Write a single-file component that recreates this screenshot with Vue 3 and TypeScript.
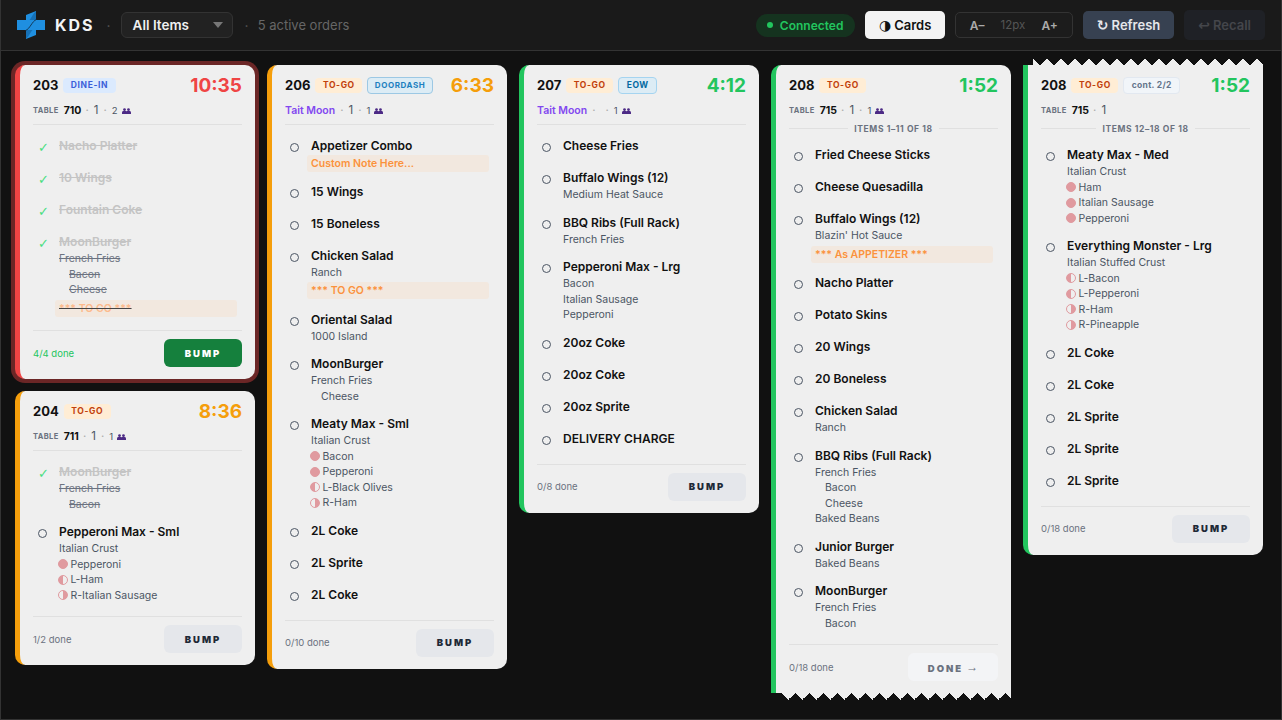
<script setup lang="ts">
type LineKind = 'sub' | 'indent' | 'full' | 'left' | 'right'

interface Line {
  text: string
  kind: LineKind
}

interface Item {
  name: string
  done?: boolean
  lines?: Line[]
  note?: string
}

interface Chip {
  label: string
  tone: 'dine' | 'togo' | 'dash' | 'eow' | 'cont'
}

interface Ticket {
  id: string
  number: string
  chips: Chip[]
  time: string
  tone: 'red' | 'amber' | 'green'
  table?: string
  guest?: string
  seats: string
  covers?: string
  range?: string
  items: Item[]
  progress: string
  action: string
  alert?: boolean
  allDone?: boolean
  tornTop?: boolean
  tornBottom?: boolean
}

const sub = (text: string): Line => ({ text, kind: 'sub' })
const indent = (text: string): Line => ({ text, kind: 'indent' })
const full = (text: string): Line => ({ text, kind: 'full' })
const left = (text: string): Line => ({ text, kind: 'left' })
const right = (text: string): Line => ({ text, kind: 'right' })
const plain = (...names: string[]): Item[] => names.map((name) => ({ name }))

const togo: Chip = { label: 'TO-GO', tone: 'togo' }

const columns: Ticket[][] = [
  [
    {
      id: 'a203',
      number: '203',
      chips: [{ label: 'DINE-IN', tone: 'dine' }],
      time: '10:35',
      tone: 'red',
      table: '710',
      seats: '1',
      covers: '2',
      alert: true,
      allDone: true,
      items: [
        { name: 'Nacho Platter', done: true },
        { name: '10 Wings', done: true },
        { name: 'Fountain Coke', done: true },
        {
          name: 'MoonBurger',
          done: true,
          lines: [sub('French Fries'), indent('Bacon'), indent('Cheese')],
          note: '*** TO GO ***',
        },
      ],
      progress: '4/4 done',
      action: 'BUMP',
    },
    {
      id: 'a204',
      number: '204',
      chips: [togo],
      time: '8:36',
      tone: 'amber',
      table: '711',
      seats: '1',
      covers: '1',
      items: [
        { name: 'MoonBurger', done: true, lines: [sub('French Fries'), indent('Bacon')] },
        {
          name: 'Pepperoni Max - Sml',
          lines: [sub('Italian Crust'), full('Pepperoni'), left('L-Ham'), right('R-Italian Sausage')],
        },
      ],
      progress: '1/2 done',
      action: 'BUMP',
    },
  ],
  [
    {
      id: 'a206',
      number: '206',
      chips: [togo, { label: 'DOORDASH', tone: 'dash' }],
      time: '6:33',
      tone: 'amber',
      guest: 'Tait Moon',
      seats: '1',
      covers: '1',
      items: [
        { name: 'Appetizer Combo', note: 'Custom Note Here...' },
        ...plain('15 Wings', '15 Boneless'),
        { name: 'Chicken Salad', lines: [sub('Ranch')], note: '*** TO GO ***' },
        { name: 'Oriental Salad', lines: [sub('1000 Island')] },
        { name: 'MoonBurger', lines: [sub('French Fries'), indent('Cheese')] },
        {
          name: 'Meaty Max - Sml',
          lines: [sub('Italian Crust'), full('Bacon'), full('Pepperoni'), left('L-Black Olives'), right('R-Ham')],
        },
        ...plain('2L Coke', '2L Sprite', '2L Coke'),
      ],
      progress: '0/10 done',
      action: 'BUMP',
    },
  ],
  [
    {
      id: 'a207',
      number: '207',
      chips: [togo, { label: 'EOW', tone: 'eow' }],
      time: '4:12',
      tone: 'green',
      guest: 'Tait Moon',
      seats: '',
      covers: '1',
      items: [
        { name: 'Cheese Fries' },
        { name: 'Buffalo Wings (12)', lines: [sub('Medium Heat Sauce')] },
        { name: 'BBQ Ribs (Full Rack)', lines: [sub('French Fries')] },
        { name: 'Pepperoni Max - Lrg', lines: [sub('Bacon'), sub('Italian Sausage'), sub('Pepperoni')] },
        ...plain('20oz Coke', '20oz Coke', '20oz Sprite', 'DELIVERY CHARGE'),
      ],
      progress: '0/8 done',
      action: 'BUMP',
    },
  ],
  [
    {
      id: 'a208',
      number: '208',
      chips: [togo],
      time: '1:52',
      tone: 'green',
      table: '715',
      seats: '1',
      covers: '1',
      range: 'ITEMS 1–11 OF 18',
      tornBottom: true,
      items: [
        ...plain('Fried Cheese Sticks', 'Cheese Quesadilla'),
        { name: 'Buffalo Wings (12)', lines: [sub("Blazin' Hot Sauce")], note: '*** As APPETIZER ***' },
        ...plain('Nacho Platter', 'Potato Skins', '20 Wings', '20 Boneless'),
        { name: 'Chicken Salad', lines: [sub('Ranch')] },
        {
          name: 'BBQ Ribs (Full Rack)',
          lines: [sub('French Fries'), indent('Bacon'), indent('Cheese'), sub('Baked Beans')],
        },
        { name: 'Junior Burger', lines: [sub('Baked Beans')] },
        { name: 'MoonBurger', lines: [sub('French Fries'), indent('Bacon')] },
      ],
      progress: '0/18 done',
      action: 'DONE',
    },
  ],
  [
    {
      id: 'b208',
      number: '208',
      chips: [togo, { label: 'cont. 2/2', tone: 'cont' }],
      time: '1:52',
      tone: 'green',
      table: '715',
      seats: '1',
      range: 'ITEMS 12–18 OF 18',
      tornTop: true,
      items: [
        {
          name: 'Meaty Max - Med',
          lines: [sub('Italian Crust'), full('Ham'), full('Italian Sausage'), full('Pepperoni')],
        },
        {
          name: 'Everything Monster - Lrg',
          lines: [
            sub('Italian Stuffed Crust'),
            left('L-Bacon'),
            left('L-Pepperoni'),
            right('R-Ham'),
            right('R-Pineapple'),
          ],
        },
        ...plain('2L Coke', '2L Coke', '2L Sprite', '2L Sprite', '2L Sprite'),
      ],
      progress: '0/18 done',
      action: 'BUMP',
    },
  ],
]
</script>

<template>
  <div class="screen">
    <header class="topbar">
      <div class="brand">
        <svg class="logo" viewBox="0 0 28 28" width="28" height="28">
          <path d="M9 4 19 0v9h9v10H19v5L9 28v-9H0V9h9z" fill="#1f8fe0" />
          <path d="M19 0v9h-6.500c2-2 3-5.500 6.500-9z" fill="#1670b5" />
          <path d="M9 28v-9h6.500c-2 2-3 5.500-6.500 9z" fill="#1670b5" />
          <path d="M19.500 8.500C15 10 13 18 8.500 19.500" fill="none" stroke="#12304a" stroke-width="0.9" />
        </svg>
        <span class="brand-name">KDS</span>
      </div>
      <span class="sep">·</span>
      <div class="filter">
        <span>All Items</span>
        <i class="caret"></i>
      </div>
      <span class="sep">·</span>
      <span class="active-count">5 active orders</span>

      <div class="controls">
        <div class="status"><i></i>Connected</div>
        <button class="btn btn-light"><span class="glyph">◑</span>Cards</button>
        <div class="font-size">
          <span>A–</span>
          <em>12px</em>
          <span>A+</span>
        </div>
        <button class="btn btn-slate"><span class="glyph">↻</span>Refresh</button>
        <button class="btn btn-off"><span class="glyph">↩</span>Recall</button>
      </div>
    </header>

    <main class="board">
      <div v-for="(column, c) in columns" :key="c" class="column">
        <article
          v-for="t in column"
          :key="t.id"
          class="ticket"
          :class="['tone-' + t.tone, { alert: t.alert, 'torn-top': t.tornTop, 'torn-bottom': t.tornBottom }]"
        >
          <div class="ticket-head">
            <span class="number">{{ t.number }}</span>
            <span v-for="chip in t.chips" :key="chip.label" class="chip" :class="'chip-' + chip.tone">{{ chip.label }}</span>
            <span class="time">{{ t.time }}</span>
          </div>

          <div class="meta">
            <template v-if="t.table">
              <span class="meta-label">TABLE</span>
              <b>{{ t.table }}</b>
            </template>
            <span v-else class="guest">{{ t.guest }}</span>
            <span class="dot-sep">·</span>
            <span class="seats">{{ t.seats }}</span>
            <template v-if="t.covers">
              <span class="dot-sep">·</span>
              <span class="covers">{{ t.covers }}</span>
              <svg class="people" viewBox="0 0 10 7" width="9" height="6.500">
                <circle cx="2.800" cy="1.600" r="1.500" />
                <circle cx="7.200" cy="1.600" r="1.500" />
                <path d="M0 7V5a2 2 0 0 1 2-2h1.600a2 2 0 0 1 1.400.6A2 2 0 0 1 6.400 3H8a2 2 0 0 1 2 2v2z" />
              </svg>
            </template>
          </div>

          <div v-if="t.range" class="range"><span>{{ t.range }}</span></div>
          <div v-else class="rule"></div>

          <ul class="items">
            <li v-for="(item, i) in t.items" :key="i" class="item" :class="{ done: item.done }">
              <span v-if="item.done" class="check">✓</span>
              <span v-else class="ring"></span>
              <div class="item-body">
                <div class="item-name">{{ item.name }}</div>
                <div v-if="item.lines" class="lines">
                  <div
                    v-for="line in item.lines"
                    :key="line.text"
                    class="line"
                    :class="'line-' + line.kind"
                  >
                    <i v-if="line.kind === 'full' || line.kind === 'left' || line.kind === 'right'" class="topping"></i>
                    <span>{{ line.text }}</span>
                  </div>
                </div>
                <div v-if="item.note" class="note"><span>{{ item.note }}</span></div>
              </div>
            </li>
          </ul>

          <footer class="ticket-foot">
            <span class="progress" :class="{ complete: t.allDone }">{{ t.progress }}</span>
            <button class="bump" :class="{ ready: t.allDone, next: t.tornBottom }">
              {{ t.action }}<span v-if="t.tornBottom" class="arrow">→</span>
            </button>
          </footer>
        </article>
      </div>
    </main>
  </div>
</template>

<style>
html,
body {
  margin: 0;
  background: #111111;
}
</style>

<style scoped>
.screen {
  box-sizing: border-box;
  width: 1282px;
  height: 720px;
  overflow: hidden;
  display: flex;
  flex-direction: column;
  background: #111111;
  border: 1px solid #333333;
  border-top: 0;
  font-family: Inter, "Liberation Sans", sans-serif;
}

.topbar {
  height: 50px;
  flex: none;
  display: flex;
  align-items: center;
  gap: 9px;
  padding: 0 16px;
  background: #1a1a1a;
  border-bottom: 1px solid #333333;
}

.brand {
  display: flex;
  align-items: center;
  gap: 10px;
}

.brand-name {
  color: #f3f4f6;
  font-size: 16px;
  font-weight: 700;
  letter-spacing: 2px;
}

.sep {
  color: #555555;
  font-size: 14px;
  margin: 0 1px 0 3px;
}

.filter {
  box-sizing: border-box;
  width: 112px;
  height: 26px;
  display: flex;
  align-items: center;
  justify-content: space-between;
  padding: 0 9px 0 11px;
  background: #222222;
  border: 1px solid #333333;
  border-radius: 6px;
  color: #f0f0f0;
  font-size: 13.500px;
  font-weight: 600;
}

.caret {
  width: 0;
  height: 0;
  border-left: 5px solid transparent;
  border-right: 5px solid transparent;
  border-top: 6px solid #777777;
}

.active-count {
  margin-left: -1px;
  color: #666666;
  font-size: 13px;
}

.controls {
  margin-left: auto;
  display: flex;
  align-items: center;
  gap: 10px;
}

.status {
  height: 23px;
  display: flex;
  align-items: center;
  gap: 7px;
  padding: 0 12px 0 11px;
  border-radius: 12px;
  background: #15331f;
  color: #22c55e;
  font-size: 12px;
  font-weight: 600;
}

.status i {
  width: 6px;
  height: 6px;
  border-radius: 50%;
  background: #22c55e;
}

.btn {
  height: 28px;
  display: flex;
  align-items: center;
  gap: 3px;
  padding: 0 14px;
  border: 0;
  border-radius: 5px;
  font-family: inherit;
  font-size: 13px;
  font-weight: 600;
}

.glyph {
  font-family: "DejaVu Sans", sans-serif;
  font-size: 14px;
  font-weight: 700;
}

.btn-light {
  padding: 0 13.500px;
  background: #f3f3f3;
  color: #111111;
}

.btn-slate {
  background: #374151;
  color: #e5e7eb;
}

.btn-off {
  height: 30px;
  background: #1f2126;
  color: #44464b;
}

.font-size {
  box-sizing: border-box;
  width: 118px;
  height: 26px;
  display: flex;
  align-items: center;
  justify-content: space-between;
  padding: 0 14px;
  border: 1px solid #333333;
  border-radius: 5px;
  background: #1c1c1c;
  color: #aaaaaa;
  font-size: 12px;
  font-weight: 600;
}

.font-size em {
  color: #555555;
  font-size: 11.500px;
  font-style: normal;
  font-weight: 400;
}

.board {
  flex: 1;
  display: flex;
  align-items: flex-start;
  gap: 12px;
  padding: 14px 14px 0;
}

.column {
  width: 240px;
  flex: none;
  display: flex;
  flex-direction: column;
  gap: 12px;
}

.ticket {
  position: relative;
  box-sizing: border-box;
  padding: 8px 13px 12px;
  background: #efefef;
  border-left: 5px solid #22c55e;
  border-radius: 10px;
}

.tone-red {
  border-left-color: #ef4444;
}

.tone-amber {
  border-left-color: #f59e0b;
}

.tone-green {
  border-left-color: #22c55e;
}

.tone-red .time {
  color: #ef4444;
}

.tone-amber .time {
  color: #f59e0b;
}

.tone-green .time {
  color: #22c55e;
}

.alert {
  box-shadow: 0 0 0 4px #6b2626;
}

.torn-bottom {
  border-bottom-left-radius: 0;
  border-bottom-right-radius: 0;
}

.torn-top {
  border-top-left-radius: 0;
  border-top-right-radius: 0;
}

/* saw-tooth edge on tickets split over two columns */
.torn-bottom::after,
.torn-top::before {
  content: "";
  position: absolute;
  left: 5px;
  right: 0;
  height: 7px;
  background-size: 14px 14px;
  background-repeat: repeat-x;
}

.torn-bottom::after {
  top: 100%;
  background-image:
    linear-gradient(135deg, #efefef 25%, transparent 25%),
    linear-gradient(-135deg, #efefef 25%, transparent 25%);
  background-position: 7px 0;
}

.torn-top::before {
  bottom: 100%;
  background-image:
    linear-gradient(45deg, #efefef 25%, transparent 25%),
    linear-gradient(-45deg, #efefef 25%, transparent 25%);
  background-position: 0 100%;
}

.ticket-head {
  display: flex;
  align-items: center;
  gap: 5px;
  height: 24px;
}

.number {
  color: #111111;
  font-size: 13px;
  font-weight: 700;
}

.chip {
  height: 15px;
  display: flex;
  align-items: center;
  padding: 0 7.500px;
  border-radius: 4px;
  font-size: 8.500px;
  font-weight: 700;
  letter-spacing: 0.6px;
}

.chip-dine {
  background: #dbeafe;
  color: #3b5fd9;
}

.chip-togo {
  background: #ffedd5;
  color: #c2410c;
}

.chip-dash {
  background: #dcecf5;
  border: 1px solid #9cc8e4;
  color: #1c80c0;
  font-size: 8px;
  padding: 0 6.500px;
}

.chip-eow {
  background: #dcecf5;
  border: 1px solid #a5d4f0;
  color: #0369a1;
}

.chip-cont {
  background: #f1f5f9;
  border: 1px solid #e2e8f0;
  color: #64748b;
  letter-spacing: 0.3px;
}

.time {
  margin-left: auto;
  font-size: 19px;
  font-weight: 700;
}

.meta {
  display: flex;
  align-items: center;
  gap: 4px;
  height: 16px;
  margin-top: 5px;
  color: #4b5563;
  font-size: 11.500px;
}

.meta-label {
  color: #6b7280;
  font-size: 7.500px;
  font-weight: 700;
  letter-spacing: 0.4px;
  margin-right: 1px;
}

.meta b {
  margin-right: -1px;
  color: #111111;
  font-size: 10.500px;
  font-weight: 700;
}

.guest {
  color: #8247f0;
  font-size: 10.500px;
  font-weight: 600;
}

.dot-sep {
  color: #aaaaaa;
  margin: 0 1px;
}

.covers {
  font-size: 9.500px;
}

.people {
  fill: #4c2a85;
  margin-top: 2px;
}

.rule {
  height: 1px;
  margin-top: 6px;
  background: #e0e0e0;
}

.range {
  display: flex;
  align-items: center;
  gap: 6px;
  height: 13px;
  margin: 4px 0 -1px;
  color: #6b7280;
  font-size: 8.500px;
  font-weight: 700;
  letter-spacing: 0.6px;
}

.range::before,
.range::after {
  content: "";
  flex: 1;
  height: 1px;
  background: #e0e0e0;
}

.items {
  list-style: none;
  margin: 5px 0 0;
  padding: 0 5px;
}

.item {
  box-sizing: border-box;
  min-height: 32px;
  display: flex;
  gap: 12px;
  padding: 8px 0 2.500px;
}

.ring {
  box-sizing: border-box;
  flex: none;
  width: 9px;
  height: 9px;
  margin-top: 5px;
  border: 1.200px solid #4b5563;
  border-radius: 50%;
}

.check {
  flex: none;
  width: 9px;
  margin-top: 3px;
  color: #4ade80;
  font-family: "DejaVu Sans", sans-serif;
  font-size: 13px;
  line-height: 14px;
}

.item-body {
  flex: 1;
  min-width: 0;
}

.item-name {
  color: #111111;
  font-size: 12px;
  font-weight: 600;
  line-height: 16px;
}

.lines {
  padding: 1px 0 1.500px;
}

.line {
  display: flex;
  align-items: center;
  gap: 3px;
  color: #4b5563;
  font-size: 10.500px;
  line-height: 15.500px;
}

.line-indent {
  padding-left: 10px;
}

.line-full,
.line-left,
.line-right {
  margin-left: -1.500px;
}

.topping {
  box-sizing: border-box;
  width: 10px;
  height: 10px;
  flex: none;
  border: 1.500px solid #e09a9f;
  border-radius: 50%;
}

.line-full .topping {
  background: #e09a9f;
}

.line-left .topping {
  background: linear-gradient(90deg, #e09a9f 50%, transparent 50%);
}

.line-right .topping {
  background: linear-gradient(90deg, transparent 50%, #e09a9f 50%);
}

.note {
  height: 17px;
  display: flex;
  align-items: center;
  margin: 1px 0 1px -4px;
  padding: 0 4px;
  border-radius: 3px;
  background: #f2e8df;
  color: #fb923c;
  font-size: 10.500px;
  font-weight: 600;
}

.lines + .note {
  margin: 0.500px 0 2px -4px;
}

.done .item-name {
  color: #c4c4c4;
  text-decoration: line-through;
}

.done .line span {
  color: #6b7280;
  text-decoration: line-through;
}

.done .note span {
  color: #fdba8c;
  text-decoration: line-through;
  text-decoration-color: #444444;
}

.ticket-foot {
  display: flex;
  align-items: center;
  justify-content: space-between;
  margin-top: 9px;
  padding-top: 8px;
  border-top: 1px solid #e0e0e0;
}

.progress {
  color: #6b7280;
  font-size: 9.500px;
}

.progress.complete {
  color: #22c55e;
}

.bump {
  width: 78px;
  height: 28px;
  border: 0;
  border-radius: 6px;
  background: #e5e7eb;
  color: #1f2937;
  font-family: Inter, sans-serif;
  font-size: 9.500px;
  font-weight: 900;
  letter-spacing: 2px;
}

.bump.ready {
  background: #15803d;
  color: #ffffff;
}

.bump.next {
  width: 90px;
  background: #f3f4f6;
  color: #6b7280;
}

.arrow {
  margin-left: 3px;
  font-family: "Liberation Sans", sans-serif;
  font-size: 12px;
  font-weight: 400;
  letter-spacing: 0;
  vertical-align: 1px;
}
</style>
